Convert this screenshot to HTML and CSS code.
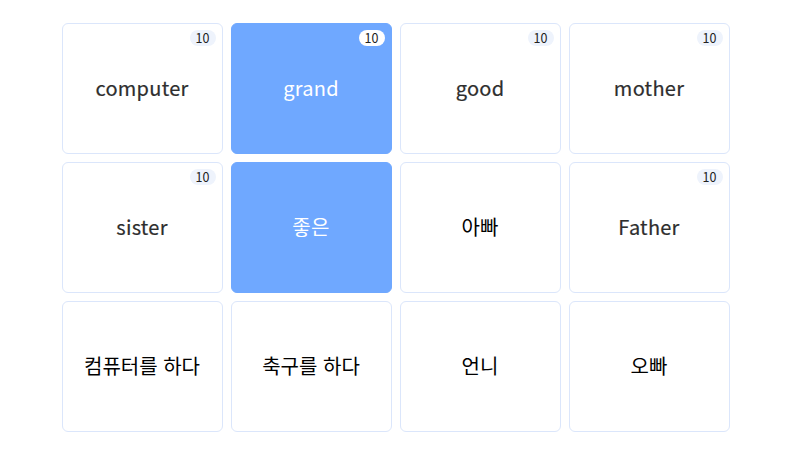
FILE: index.html
```html
<!DOCTYPE html>
<html lang="ko">
<head>
    <meta charset="UTF-8">
    <title>Word Cards</title>
    <meta name="viewport" content="width=device-width, initial-scale=1">
    <link rel="stylesheet" href="styles.css">
</head>
<body>
    <div class="board">
        <div class="card"><span class="count">10</span><span class="word">computer</span></div>
        <div class="card selected"><span class="count">10</span><span class="word">grand</span></div>
        <div class="card"><span class="count">10</span><span class="word">good</span></div>
        <div class="card"><span class="count">10</span><span class="word">mother</span></div>

        <div class="card"><span class="count">10</span><span class="word">sister</span></div>
        <div class="card selected"><span class="word">좋은</span></div>
        <div class="card"><span class="word ko">아빠</span></div>
        <div class="card"><span class="count">10</span><span class="word">Father</span></div>

        <div class="card"><span class="word ko">컴퓨터를 하다</span></div>
        <div class="card"><span class="word ko">축구를 하다</span></div>
        <div class="card"><span class="word ko">언니</span></div>
        <div class="card"><span class="word ko">오빠</span></div>
    </div>
</body>
</html>
```

FILE: styles.css
```css
body { margin: 0; background: #fff; font-family: "Noto Sans CJK KR", "Noto Sans", sans-serif; }
.board { width: 668px; margin: 0 auto; padding: 23px 0 19px 1px; display: grid; grid-template-columns: repeat(4, 161px); grid-auto-rows: 131px; gap: 8px; }
.card { position: relative; display: flex; align-items: center; justify-content: center; border: 1px solid #dbe6fb; border-radius: 6px; background: #fff; box-sizing: border-box; }
.card.selected { background: #6fa8ff; border-color: #6fa8ff; }
.word { font-size: 20px; font-weight: 400; color: #2e2e2e; letter-spacing: 0.25px; margin-top: -2px; -webkit-text-stroke: 0.2px #2e2e2e; }
.word.ko { color: #000; letter-spacing: 0; -webkit-text-stroke: 0; }
.selected .word { color: #fff; -webkit-text-stroke: 0; }
.count { position: absolute; top: 6px; right: 6px; padding: 0 6px; height: 16px; line-height: 16px; border-radius: 8px; background: #eef3fc; color: #222; font-size: 12.5px; }
.selected .count { background: #fff; }
```
